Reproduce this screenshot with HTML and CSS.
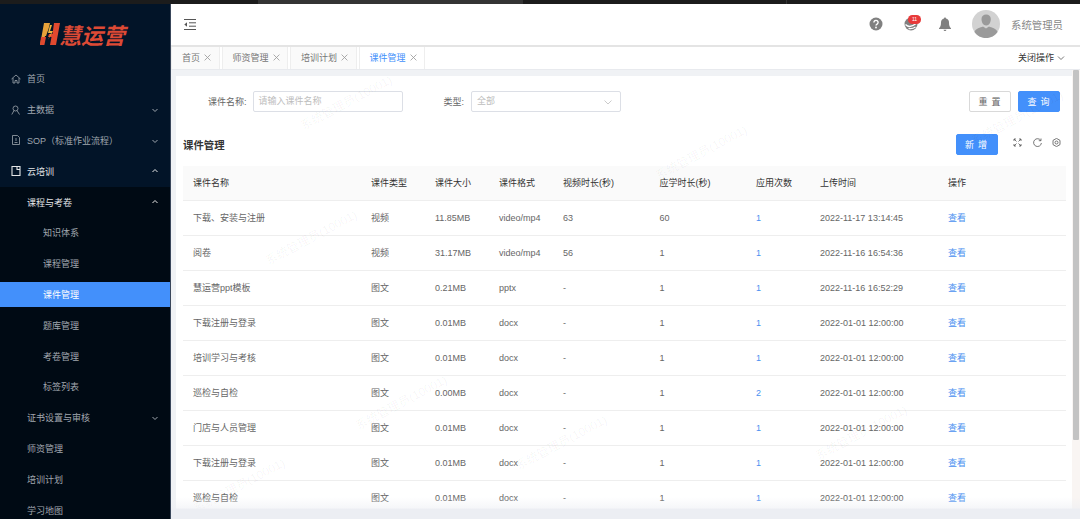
FILE: index.html
```html
<!DOCTYPE html>
<html lang="zh-CN">
<head>
<meta charset="utf-8">
<title>课件管理</title>
<link rel="stylesheet" href="styles.css">
</head>
<body>
<div class="strip"><i class="s1"></i><i class="s2"></i><i class="s3"></i><i class="s4"></i></div>
<div class="app">
  <aside class="side">
    <div class="logo">
      <svg class="logo-h" viewBox="0 0 20 22" width="20" height="22">
        <path d="M4 0h6L8.500 6 6 13H5L3.500 22H0z" fill="#e8a33a"/>
        <path d="M1 14h5l-1.600 8H0z" fill="#e0492f"/>
        <path d="M14 0h6l-4 22h-6l1.500-8H8l1-3h3.500z" fill="#e0492f"/>
        <path d="M10 2l-2 8h3l-3 7 5-9h-3l2-6z" fill="#f0b63c"/>
      </svg>
      <span class="logo-t">慧运营</span>
    </div>
    <nav class="nav">
      <div class="item"><svg class="ic" viewBox="0 0 10 10"><path d="M.5 5 5 1l4.500 4M2 4v5h2V6.500h2V9h2V4"/></svg>首页</div>
      <div class="item"><svg class="ic" viewBox="0 0 10 10"><circle cx="4.500" cy="3.500" r="2.500"/><path d="M.8 9.500 3 5.500M8.500 9.500 6 5.500"/></svg>主数据<svg class="chev" viewBox="0 0 8 8"><path d="M1.500 3 4 5.500 6.500 3"/></svg></div>
      <div class="item"><svg class="ic" viewBox="0 0 10 10"><path d="M1.500.5h5l2 2v7h-7zM3.500 7.500h3M5 3v3"/></svg>SOP（标准作业流程）<svg class="chev" viewBox="0 0 8 8"><path d="M1.500 3 4 5.500 6.500 3"/></svg></div>
      <div class="item open"><svg class="ic ic-w" viewBox="0 0 10 10"><path d="M1 .5h8v9H1zM6 .5v3h3"/></svg>云培训<svg class="chev" viewBox="0 0 8 8"><path d="M1.500 5 4 2.500 6.500 5"/></svg></div>
      <div class="sub">
        <div class="item open lv2">课程与考卷<svg class="chev" viewBox="0 0 8 8"><path d="M1.500 5 4 2.500 6.500 5"/></svg></div>
        <div class="item lv3">知识体系</div>
        <div class="item lv3">课程管理</div>
        <div class="item lv3 active">课件管理</div>
        <div class="item lv3">题库管理</div>
        <div class="item lv3">考卷管理</div>
        <div class="item lv3">标签列表</div>
        <div class="item lv2">证书设置与审核<svg class="chev" viewBox="0 0 8 8"><path d="M1.500 3 4 5.500 6.500 3"/></svg></div>
        <div class="item lv2">师资管理</div>
        <div class="item lv2">培训计划</div>
        <div class="item lv2">学习地图</div>
      </div>
    </nav>
  </aside>
  <main class="main">
    <header class="head">
      <svg class="fold" viewBox="0 0 12 11"><path d="M0 .5h12M5 3.800h7M5 7.200h7M0 10.500h12"/><path class="fill" d="M3 3.200v4.600L.3 5.500z"/></svg>
      <div class="head-right">
        <svg class="hi" viewBox="0 0 14 14"><circle cx="7" cy="7" r="6.500" fill="#808080"/><path d="M4.900 5.400a2.100 2 0 1 1 3.200 1.700c-.8.500-1.100.8-1.100 1.500" fill="none" stroke="#fff" stroke-width="1.400"/><circle cx="7" cy="10.500" r=".9" fill="#fff"/></svg>
        <span class="msg">
          <svg class="hi" viewBox="0 0 14 14"><circle cx="7" cy="7" r="6.500" fill="#808080"/><path d="M1.500 7.500C4 10 8 10 12 6.500M4.500 11.500c2.500.5 5 0 7-1.500" fill="none" stroke="#fff" stroke-width="1.300"/></svg>
          <b class="badge">11</b>
        </span>
        <svg class="hi" viewBox="0 0 14 14"><path d="M7 .5c.7 0 1 .5 1 1 2 .5 3 2 3 4 0 3 .6 4.500 2 5.800v.7H1v-.7c1.400-1.300 2-2.800 2-5.800 0-2 1-3.500 3-4 0-.5.300-1 1-1zM5.500 12.800h3C8.300 13.600 7.700 14 7 14s-1.300-.4-1.500-1.200z" fill="#808080"/></svg>
        <svg class="avatar" viewBox="0 0 28 28"><circle cx="14" cy="14" r="14" fill="#d2d2d2"/><path d="M9.500 9c0-3 2-4.500 4.700-4.500S18.800 6 18.800 9c0 3-1.500 6.500-4.600 6.500S9.500 12 9.500 9zM2.500 22c1-3.500 6-4.500 8.500-5.500l3 2 3-2c2.500 1 7.500 2 8.500 5.500-2.500 3.700-6.800 6-11.500 6S5 25.700 2.500 22z" fill="#9a9a9a"/></svg>
        <span class="uname">系统管理员</span>
      </div>
    </header>
    <div class="tabs">
      <div class="tab">首页<svg class="x" viewBox="0 0 6 6"><path d="M.5.500l5 5M5.500.5l-5 5"/></svg></div>
      <div class="tab">师资管理<svg class="x" viewBox="0 0 6 6"><path d="M.5.500l5 5M5.500.5l-5 5"/></svg></div>
      <div class="tab">培训计划<svg class="x" viewBox="0 0 6 6"><path d="M.5.500l5 5M5.500.5l-5 5"/></svg></div>
      <div class="tab on">课件管理<svg class="x" viewBox="0 0 6 6"><path d="M.5.500l5 5M5.500.5l-5 5"/></svg></div>
      <div class="close-ops">关闭操作<svg class="cv" viewBox="0 0 8 8"><path d="M1 2.500 4 5.500 7 2.500"/></svg></div>
    </div>
    <div class="body">
      <div class="viewport">
        <section class="card">
          <form class="filter">
            <label class="lbl l1">课件名称:</label>
            <div class="inp i1">请输入课件名称</div>
            <label class="lbl l2">类型:</label>
            <div class="inp i2">全部<svg class="cv2" viewBox="0 0 8 8"><path d="M.5 2.500 4 6 7.500 2.500"/></svg></div>
            <div class="btns">
              <button type="button" class="btn ghost">重 置</button>
              <button type="button" class="btn pri">查 询</button>
            </div>
          </form>
          <div class="tools">
            <h2 class="title">课件管理</h2>
            <button type="button" class="btn pri">新 增</button>
            <div class="tool-ic">
              <svg viewBox="0 0 9 9"><path d="M3.500 3.500 1 1M1 3V1h2M5.500 3.500 8 1M6 1h2v2M5.500 5.500 8 8M8 6v2H6M3.500 5.500 1 8M3 8H1V6"/></svg>
              <svg viewBox="0 0 9 9"><path d="M7.800 2.500A3.900 3.900 0 1 0 8.400 5M8 .5v2.200H5.800"/></svg>
              <svg viewBox="0 0 9 9"><path d="M4.500.4 8 2.400v4.200L4.500 8.600 1 6.600V2.400z"/><circle cx="4.500" cy="4.500" r="1.500"/></svg>
            </div>
          </div>
          <table class="tbl">
            <colgroup><col class="c1"><col class="c2"><col class="c2"><col class="c2"><col class="c3"><col class="c3"><col class="c2"><col class="c4"><col class="c4"></colgroup>
            <thead><tr><th>课件名称</th><th>课件类型</th><th>课件大小</th><th>课件格式</th><th>视频时长(秒)</th><th>应学时长(秒)</th><th>应用次数</th><th>上传时间</th><th>操作</th></tr></thead>
            <tbody>
              <tr><td>下载、安装与注册</td><td>视频</td><td>11.85MB</td><td>video/mp4</td><td>63</td><td>60</td><td><a>1</a></td><td>2022-11-17 13:14:45</td><td><a>查看</a></td></tr>
              <tr><td>阅卷</td><td>视频</td><td>31.17MB</td><td>video/mp4</td><td>56</td><td>1</td><td><a>1</a></td><td>2022-11-16 16:54:36</td><td><a>查看</a></td></tr>
              <tr><td>慧运营ppt模板</td><td>图文</td><td>0.21MB</td><td>pptx</td><td>-</td><td>1</td><td><a>1</a></td><td>2022-11-16 16:52:29</td><td><a>查看</a></td></tr>
              <tr><td>下载注册与登录</td><td>图文</td><td>0.01MB</td><td>docx</td><td>-</td><td>1</td><td><a>1</a></td><td>2022-01-01 12:00:00</td><td><a>查看</a></td></tr>
              <tr><td>培训学习与考核</td><td>图文</td><td>0.01MB</td><td>docx</td><td>-</td><td>1</td><td><a>1</a></td><td>2022-01-01 12:00:00</td><td><a>查看</a></td></tr>
              <tr><td>巡检与自检</td><td>图文</td><td>0.00MB</td><td>docx</td><td>-</td><td>1</td><td><a>2</a></td><td>2022-01-01 12:00:00</td><td><a>查看</a></td></tr>
              <tr><td>门店与人员管理</td><td>图文</td><td>0.01MB</td><td>docx</td><td>-</td><td>1</td><td><a>1</a></td><td>2022-01-01 12:00:00</td><td><a>查看</a></td></tr>
              <tr><td>下载注册与登录</td><td>图文</td><td>0.01MB</td><td>docx</td><td>-</td><td>1</td><td><a>1</a></td><td>2022-01-01 12:00:00</td><td><a>查看</a></td></tr>
              <tr><td>巡检与自检</td><td>图文</td><td>0.01MB</td><td>docx</td><td>-</td><td>1</td><td><a>1</a></td><td>2022-01-01 12:00:00</td><td><a>查看</a></td></tr>
            </tbody>
          </table>
          <span class="wm w1">系统管理员(10001)</span>
          <span class="wm w2">系统管理员(10001)</span>
          <span class="wm w3">系统管理员(10001)</span>
          <span class="wm w4">系统管理员(10001)</span>
          <span class="wm w5">系统管理员(10001)</span>
          <span class="wm w6">系统管理员(10001)</span>
          <span class="wm w7">系统管理员(10001)</span>
          <span class="wm w8">系统管理员(10001)</span>
        </section>
      </div>
      <div class="scrollbar"><div class="thumb"></div></div>
      <div class="fade"></div>
    </div>
  </main>
</div>
</body>
</html>
```

FILE: styles.css
```css
* { box-sizing: border-box; }
html, body { margin: 0; height: 100%; overflow: hidden; }
body {
  width: 1080px;
  height: 519px;
  font-family: "Liberation Sans", "Noto Sans CJK SC", sans-serif;
  font-size: 9px;
  color: #666;
  background: #fff;
}
.strip { display: flex; height: 4px; background: #1a1a1a; }
.strip i { display: block; height: 4px; }
.s1 { width: 258px; background: #1c1c1c; }
.s2 { width: 264px; background: #343434; }
.s3 { width: 264px; background: #1c1c1c; border-left: 1px solid #333; }
.s4 { flex: 1; background: #1c1c1c; border-left: 1px solid #333; }

.app { display: flex; height: 515px; }

/* sidebar */
.side {
  width: 171px;
  flex: none;
  background: #021428;
  border-right: 1px solid #39465a;
  overflow: hidden;
}
.logo { display: flex; align-items: center; height: 60px; padding: 0 0 0 40px; }
.logo-h { flex: none; }
.logo-t {
  margin-left: -1px;
  font: italic 700 22px/22px "Noto Sans CJK SC", sans-serif;
  color: #dd4a35;
  white-space: nowrap;
}
.nav { padding-top: 2px; }
.item {
  position: relative;
  display: flex;
  align-items: center;
  height: 25.800px;
  margin-bottom: 5px;
  padding-left: 11px;
  color: #a0a7af;
  white-space: nowrap;
}
.ic { width: 10px; height: 10px; margin-right: 6px; fill: none; stroke: #a0a7af; stroke-width: .8; flex: none; }
.ic-w { stroke: #e4e6e8; stroke-width: 1.100; }
.chev {
  position: absolute;
  right: 11px;
  top: 9px;
  width: 8px;
  height: 8px;
  fill: none;
  stroke: #a0a7af;
  stroke-width: 1;
}
.open { color: #e4e6e8; }
.open .chev { stroke: #e8e8e8; }
.sub { background: #000a14; margin-top: -2px; padding-top: 2px; }
.lv2 { padding-left: 27px; }
.lv3 { padding-left: 43px; }
.active { background: #4390fb; color: #fff; }

/* main */
.main { flex: 1; min-width: 0; display: flex; flex-direction: column; background: #f0f2f5; }
.head {
  display: flex;
  align-items: center;
  height: 43px;
  padding: 0 17px 1px 13px;
  background: #fff;
  border-bottom: 2px solid #e4e4e4;
  flex: none;
}
.fold { width: 12px; height: 11px; fill: none; stroke: #555; stroke-width: 1; }
.fold .fill { fill: #555; stroke: none; }
.head-right { margin-left: auto; display: flex; align-items: center; }
.hi { display: block; width: 14px; height: 14px; }
.msg { position: relative; display: block; margin-left: 21px; }
.badge {
  position: absolute;
  top: -2px;
  left: 4px;
  width: 13px;
  height: 8.500px;
  border-radius: 4.250px;
  background: #e83a3a;
  color: #fff;
  font-size: 5px;
  line-height: 8.500px;
  font-weight: 400;
  text-align: center;
}
.msg + .hi { margin-left: 20px; }
.avatar { width: 28px; height: 28px; margin-left: 20px; }
.uname { margin-left: 11px; font-size: 10.400px; color: #888; }

.tabs {
  display: flex;
  align-items: stretch;
  gap: 2px;
  height: 23px;
  background: #fff;
  border-bottom: 1px solid #e8eaee;
  flex: none;
}
.tab {
  display: flex;
  align-items: center;
  padding: 0 7.500px 1px 10px;
  background: #fafafa;
  border: 1px solid #eee;
  border-top: 0;
  border-bottom: 0;
  color: #777;
  white-space: nowrap;
}
.tab.on { background: #fff; color: #4390fb; }
.x { width: 7px; height: 7px; margin-left: 4px; fill: none; stroke: #999; stroke-width: .7; }
.close-ops { margin-left: auto; display: flex; align-items: center; padding: 0 15px 1px 0; color: #333; }
.cv { width: 8px; height: 8px; margin-left: 3px; fill: none; stroke: #555; stroke-width: .8; }

.body { position: relative; flex: 1; min-height: 0; display: flex; padding: 0 0 0 5px; }
.viewport { flex: 1; min-width: 0; overflow: hidden; padding-top: 6px; }
.card { position: relative; background: #fff; padding: 15px 7px 0; height: 700px; }
.filter { display: flex; align-items: center; height: 21px; }
.lbl { color: #666; white-space: nowrap; }
.l1 { margin-left: 25px; }
.l2 { margin-left: 41px; }
.inp {
  position: relative;
  width: 150px;
  height: 21px;
  margin-left: 6px;
  padding-left: 5px;
  border: 1px solid #dcdfe6;
  border-radius: 2px;
  color: #bdbdbd;
  line-height: 19px;
}
.i2 { margin-left: 7px; }
.cv2 { position: absolute; right: 8px; top: 6px; width: 8px; height: 8px; fill: none; stroke: #b5b5b5; stroke-width: .7; }
.btns { margin-left: auto; display: flex; gap: 7px; padding-right: 5px; }
.btn {
  width: 42px;
  height: 21px;
  padding: 0;
  border: 1px solid #4390fb;
  border-radius: 2px;
  font: 9px "Noto Sans CJK SC", sans-serif;
  letter-spacing: 1px;
}
.pri { background: #4390fb; color: #fff; }
.ghost { background: #fff; border-color: #d9d9d9; color: #666; }
.tools { display: flex; align-items: center; height: 21px; margin-top: 22px; }
.title { margin: 0; font-size: 10.400px; font-weight: 700; color: #333; }
.tools .btn { margin-left: auto; }
.tool-ic { display: flex; gap: 10.500px; margin: -5px 4px 0 15.500px; }
.tool-ic svg { width: 9px; height: 9px; fill: none; stroke: #555; stroke-width: .8; }
.tbl {
  width: 883px;
  margin-top: 11px;
  border-collapse: collapse;
  table-layout: fixed;
  font-size: 9px;
}
.c1 { width: 178px; }
.c2 { width: 64px; }
.c3 { width: 96.500px; }
.c4 { width: 128px; }
.tbl th, .tbl td {
  padding: 0 0 0 10px;
  text-align: left;
  white-space: nowrap;
  border-bottom: 1px solid #eee;
  height: 35px;
  font-weight: 400;
}
.tbl th { height: 34px; background: #fafafa; color: #333; }
.tbl a { color: #4a90f0; }

.wm {
  position: absolute;
  font-size: 12px;
  color: rgba(0, 0, 0, .045);
  transform: rotate(-28deg);
  white-space: nowrap;
  pointer-events: none;
}
.w1 { left: 84px; top: 152px; }
.w2 { left: 474px; top: 67px; }
.w3 { left: 119px; top: 17px; }
.w4 { left: 174px; top: 317px; }
.w5 { left: 334px; top: 357px; }
.w6 { left: 790px; top: 32px; }
.w7 { left: 12px; top: 400px; }
.w8 { left: 634px; top: 347px; }

.fade {
  position: absolute;
  left: 0;
  right: 0;
  bottom: 0;
  height: 22px;
  background: linear-gradient(to bottom, rgba(236, 238, 243, 0) 0, rgba(236, 238, 243, .5) 50%, #eceef3 55%);
  pointer-events: none;
}
.scrollbar { width: 8px; flex: none; background: #f9f5f3; }
.thumb { width: 6px; height: 370px; margin-left: 1px; background: #c3c3c3; border-radius: 1px; }
```
